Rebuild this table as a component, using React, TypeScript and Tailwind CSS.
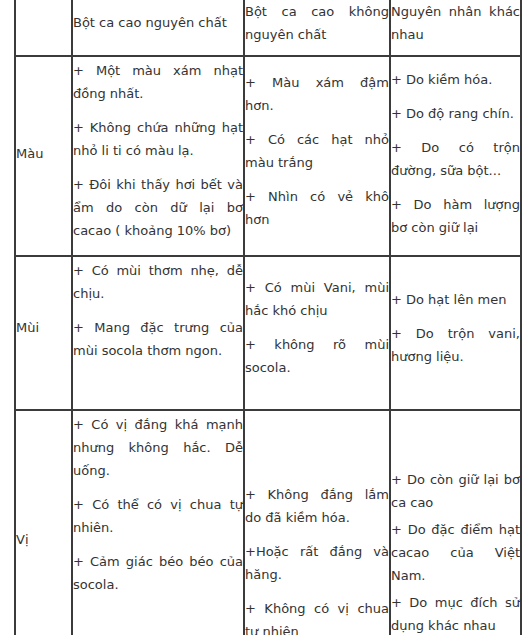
// each paragraph is a list of lines, broken where the reference breaks them
type Para = string[]
type Cell = { paras: Para[]; pt?: string; gap?: string }
type Row = { label: Cell; cols: Cell[]; top?: boolean }

const ROWS: Row[] = [
  {
    label: { paras: [['Màu']], pt: 'pt-[8px]' },
    cols: [
      {
        paras: [
          ['+ Một màu xám nhạt', 'đồng nhất.'],
          ['+ Không chứa những hạt', 'nhỏ li ti có màu lạ.'],
          ['+ Đôi khi thấy hơi bết và', 'ẩm do còn dữ lại bơ', 'cacao ( khoảng 10% bơ)'],
        ],
      },
      { paras: [['+ Màu xám đậm', 'hơn.'], ['+ Có các hạt nhỏ', 'màu trắng'], ['+ Nhìn có vẻ khô', 'hơn']] },
      {
        paras: [['+ Do kiềm hóa.'], ['+ Do độ rang chín.'], ['+ Do có trộn', 'đường, sữa bột...'], ['+ Do hàm lượng', 'bơ còn giữ lại']],
        pt: 'pt-[8px]',
      },
    ],
  },
  {
    label: { paras: [['Mùi']] },
    cols: [
      { paras: [['+ Có mùi thơm nhẹ, dễ', 'chịu.'], ['+ Mang đặc trưng của', 'mùi socola thơm ngon.'], ['']] },
      { paras: [['+ Có mùi Vani, mùi', 'hắc khó chịu'], ['+ không rõ mùi', 'socola.']] },
      { paras: [['+ Do hạt lên men'], ['+ Do trộn vani,', 'hương liệu.']] },
    ],
  },
  {
    top: true,
    label: { paras: [['Vị']], pt: 'pt-[117px]' },
    cols: [
      {
        paras: [
          ['+ Có vị đắng khá mạnh', 'nhưng không hắc. Dễ', 'uống.'],
          ['+ Có thể có vị chua tự', 'nhiên.'],
          ['+ Cảm giác béo béo của', 'socola.'],
        ],
      },
      { paras: [['+ Không đắng lắm', 'do đã kiềm hóa.'], ['+Hoặc rất đắng và', 'hăng.'], ['+ Không có vị chua', 'tự nhiên']], pt: 'pt-[72px]' },
      {
        paras: [['+ Do còn giữ lại bơ', 'ca cao'], ['+ Do đặc điểm hạt', 'cacao của Việt', 'Nam.'], ['+ Do mục đích sử', 'dụng khác nhau']],
        pt: 'pt-[57px]',
        gap: 'mb-[4px]',
      },
    ],
  },
]

const border = 'border-2 border-[#3b3b3b] px-0'

function Lines({ lines }: { lines: string[] }) {
  return (
    <>
      {lines.map((l, i) =>
        i < lines.length - 1 ? (
          <span key={i} className="block text-justify [text-align-last:justify]">
            {l}
          </span>
        ) : (
          <span key={i} className="block">
            {l || '\u00a0'}
          </span>
        )
      )}
    </>
  )
}

function Content({ cell }: { cell: Cell }) {
  return (
    <>
      {cell.paras.map((p, i) => (
        <p key={i} className={cell.gap ?? 'mb-[11px]'}>
          <Lines lines={p} />
        </p>
      ))}
    </>
  )
}

export default function App() {
  return (
    <div className="h-[635px] overflow-hidden bg-white">
      <table
        className="ml-[14px] -mt-[14px] w-[506px] table-fixed border-collapse text-[13px] leading-[23px] text-[#333]"
        style={{ fontFamily: '"DejaVu Sans", Verdana, sans-serif' }}
      >
        <colgroup>
          <col className="w-[57px]" />
          <col className="w-[172px]" />
          <col className="w-[146px]" />
          <col className="w-[131px]" />
        </colgroup>
        <tbody>
          <tr>
            <td className={`${border} h-[69px] pt-[4px] pb-[2px] align-middle`}></td>
            <td className={`${border} h-[69px] pt-[4px] pb-[2px] align-middle`}>
              <Lines lines={['Bột ca cao nguyên chất']} />
            </td>
            <td className={`${border} h-[69px] pt-[4px] pb-[2px] align-middle`}>
              <Lines lines={['Bột ca cao không', 'nguyên chất']} />
            </td>
            <td className={`${border} h-[69px] pt-[4px] pb-[2px] align-middle`}>
              <Lines lines={['Nguyên nhân khác', 'nhau']} />
            </td>
          </tr>
          {ROWS.map((row, r) => (
            <tr key={r}>
              {[row.label, ...row.cols].map((c, i) => (
                <td
                  key={i}
                  className={`${border} ${
                    row.top ? `h-[300px] align-top pb-[2px] ${c.pt ?? 'pt-[2px]'}` : `pb-[2px] align-middle ${c.pt ?? 'pt-[2px]'}`
                  }`}
                >
                  <Content cell={c} />
                </td>
              ))}
            </tr>
          ))}
        </tbody>
      </table>
    </div>
  )
}
